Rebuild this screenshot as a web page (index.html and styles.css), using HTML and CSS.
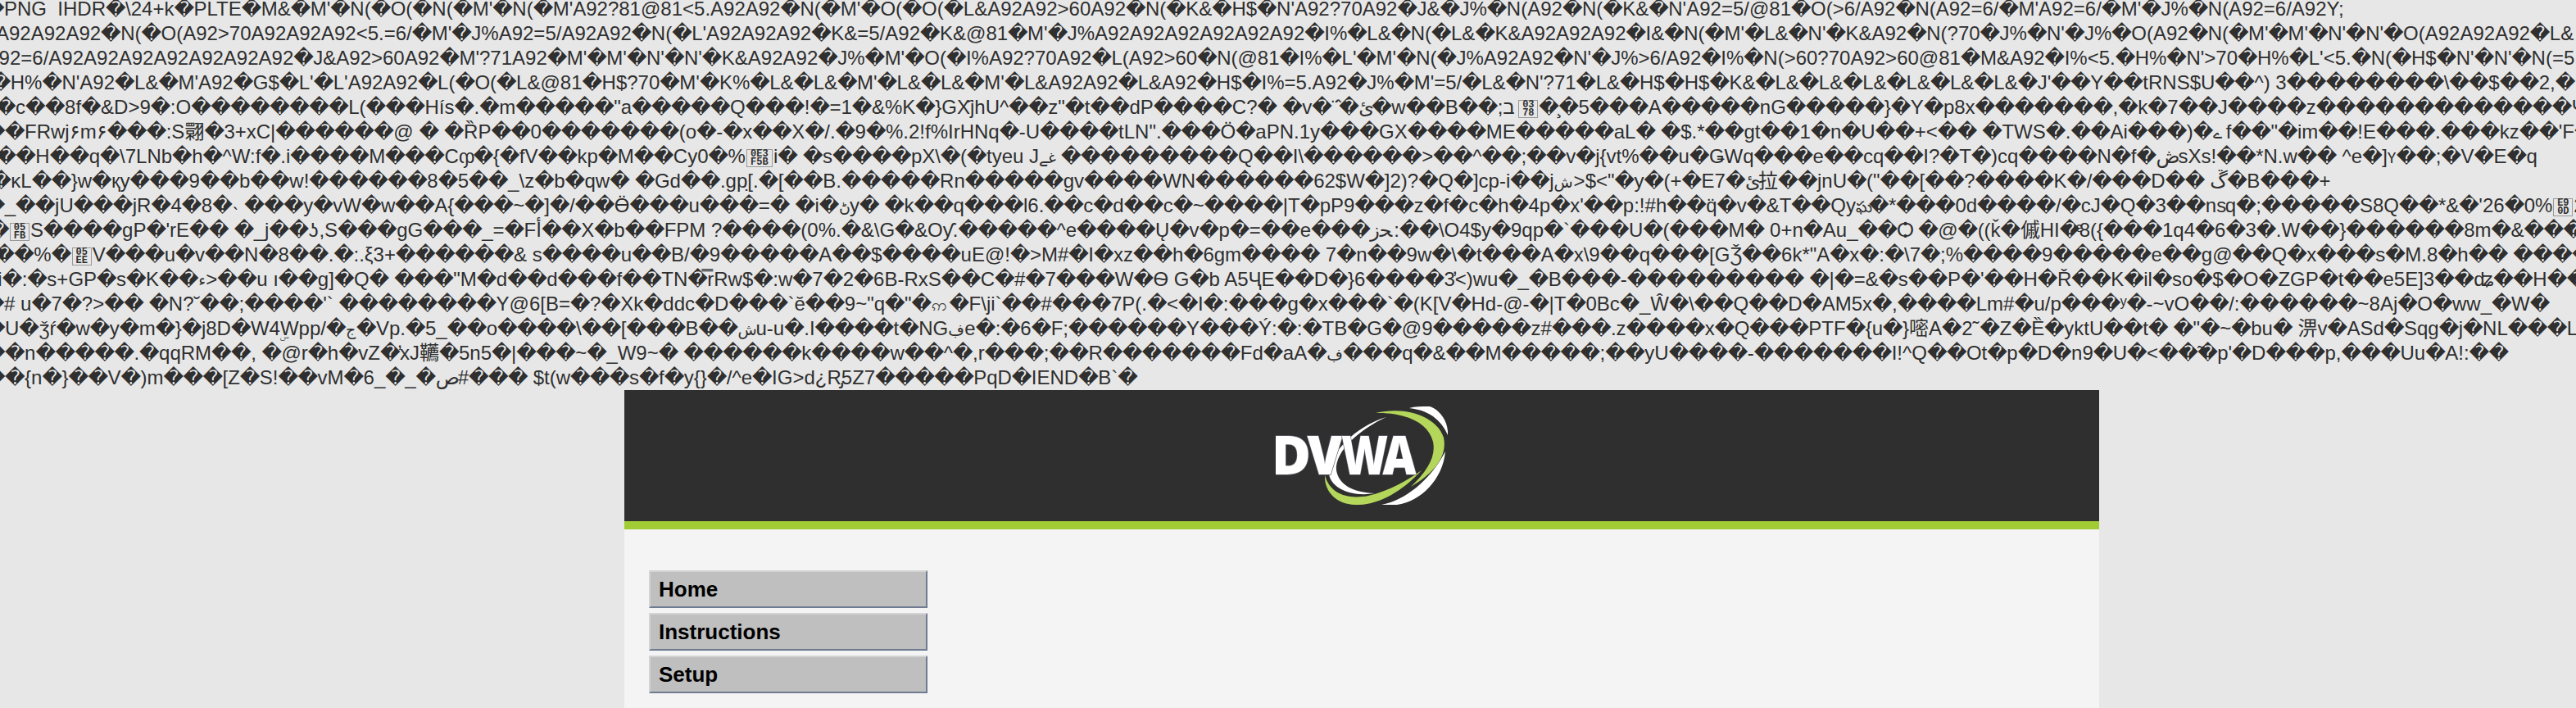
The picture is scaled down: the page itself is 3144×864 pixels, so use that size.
FILE: index.html
```html
<!DOCTYPE html>
<html lang="en">
<head>
<meta charset="utf-8">
<title>DVWA</title>
<link rel="stylesheet" href="styles.css">
</head>
<body>
<div class="dump">
<div class="row r1">�PNG  IHDR�\24+k�PLTE�M&amp;�M'�N(�O(�N(�M'�N(�M'A92?81@81&lt;5.A92A92�N(�M'�O(�O(�L&amp;A92A92>60A92�N(�K&amp;�H$�N'A92?70A92�J&amp;�J%�N(A92�N(�K&amp;�N'A92=5/@81�O(>6/A92�N(A92=6/�M'A92=6/�M'�J%�N(A92=6/A92Y;</div>
<div class="row r2">A92A92A92�N(�O(A92>70A92A92A92&lt;5.=6/�M'�J%A92=5/A92A92�N(�L'A92A92A92�K&amp;=5/A92�K&amp;@81�M'�J%A92A92A92A92A92A92�I%�L&amp;�N(�L&amp;�K&amp;A92A92A92�I&amp;�N(�M'�L&amp;�N'�K&amp;A92�N(?70�J%�N'�J%�O(A92�N(�M'�M'�N'�N'�O(A92A92A92�L&amp;</div>
<div class="row r3">92=6/A92A92A92A92A92A92A92�J&amp;A92>60A92�M'?71A92�M'�M'�N'�N'�K&amp;A92A92�J%�M'�O(�I%A92?70A92�L(A92>60�N(@81�I%�L'�M'�N(�J%A92A92�N'�J%>6/A92�I%�N(>60?70A92>60@81�M&amp;A92�I%&lt;5.�H%�N'>70�H%�L'&lt;5.�N(�H$�N'�N'�N(=5</div>
<div class="row r4">�H%�N'A92�L&amp;�M'A92�G$�L'�L'A92A92�L(�O(�L&amp;@81�H$?70�M'�K%�L&amp;�L&amp;�M'�L&amp;�L&amp;�M'�L&amp;A92A92�L&amp;A92�H$�I%=5.A92�J%�M'=5/�L&amp;�N'?71�L&amp;�H$�H$�K&amp;�L&amp;�L&amp;�L&amp;�L&amp;�L&amp;�L&amp;�J'��Y��tRNS$U��^) 3��������\��$��2,�</div>
<div class="row r5">�c��8f�&amp;D>9�:O��������L(���Hís�.�m�����"a�����Q���!�=1�&amp;%K�}GX<span class="m">҄</span>jhU^��z"�t��dP����C?� �v�<span class="g w9">¨̂</span>�<span class="g w16">ئ</span>�w��B��;<span class="g w18">ב</span><span class="hex">03<br>78</span>�<span class="m">̧</span>�5���A�����nG�����}�Y�p8x�������,�k�7��J����z�������������<span class="g w18">Ψ</span> �</div>
<div class="row r6">��FRwj<span class="g w13">۶</span>m<span class="g w13">۶</span>���:S<span class="g w24">翾</span>�3+xC|������@ � �ȐP��0�������(o�-�x��X�/.�9�%.2!f%IrHNq�-U����tLN".���Ö�aPN.1y���GX����ME�����aL� �$.*��gt��1�n�U��+&lt;�� �TWS�.��Ai���)�<span class="g w16 md">ے</span>f��"�im��!E���.���kz��'F�</div>
<div class="row r7">��H��q�\7LNb�h�^W:f�.i����M���C<span class="g w18">ჶ</span>�{�fV��kp�M��Cy0�%<span class="hex wide">0E3<br>F5B</span>i� �s����pX\�(�tyeu J<span class="g w27 md">غے</span>���������Q��I\������>��^��;��v�j{vt%��u�ǤWq���e��cq��I?�T�)cq����N�f�<span class="g w27">ڞ</span>sXs!��*N.w�� ^e�]<span class="g w11 md">Ү</span>��;�V�E�q</div>
<div class="row r8">�κL��}w�қy���9��b��w!������8�5��_\z�b�qw� �Gd��.gp[<span class="m">̣</span>.�[��B.�����Rn�����gv����WN������62$W�]2)?�Q�]cp-i��j<span class="g w24 md">ش</span>>$&lt;"�y�(+�E7�<span class="g w16">ئ</span><span class="g w24">拉</span>��jnU�("��[��?����K�/���D�� <span class="g w21">ڱ</span>�B���+</div>
<div class="row r9">�_��jU���jR�4�8�<span class="g w15">˴</span>���y�vW�w��A{���~�]�/��Ӫ���u���=� �i�<span class="g w13 md">ڻ</span>y� �k��q���l6.��c�d��c�~����|T�pP9���z�f�c�h�4p�x'��p:!#h��q̈�v�&amp;T��Qy<span class="g w16 md">ఘ</span>�*���0d����/�cJ�Q�3��<span class="g w24">ns</span>q�;�����S8Q��*&amp;�'26�0%<span class="hex">E9<br>0D</span>2</div>
<div class="row r10">�<span class="hex">05<br>FB</span>S����gP�'rE�� �_j��<span class="g w13">ʖ</span>,S���gG���_=�F<span class="g w7">أ</span>��X�b��FPM ?����(0%.�&amp;\G�&amp;Oƴ.�����^e����Ų�v�p�=��e���<span class="g w29">ﺤز</span>:��\O4$y�9qp�`���U�(���M� 0+n�Au_��<span class="g w19">Ѻ</span> �@�((ǩ�<span class="g w24">傶</span>HI�<span class="m">ͤ</span>8({���1q4�6�3�.W��}������8m�&amp;���</div>
<div class="row r11">��%�<span class="hex">05<br>EE</span>V���u�v��N�8��.�:.ξ3+������&amp; s����u��B/�9�����A��$����uE@!�>M#�I�xz��h�6gm���� 7�n��9w�\�t���A�x\9��q���[GǮ��6k*"A�x�:�\7�;%����9�����e��g@��Q�x���s�M.8�h�� ����</div>
<div class="row r12">i�:�s+GP�s�K��<span class="g w9 md">ء</span>>��u ı��g]�Q� ���"M�d��d���f��TN�<span class="m">̿</span>rRw$�:w�7�2�6B-RxS��C�#�7���W�Ѳ G�b A5ҶE��D�}6����3<span class="m">̓</span>&lt;)wu�_�B���-��������� �|�=&amp;�s��P�'��H�Ř��K�il�so�$�O�ZGP�t��e5E]3��ʥ��H��</div>
<div class="row r13">�# u�7�?>�� �N?<span class="g w7">˘</span>��;����'` ��������Y@6[B=�?�Xk�ddc�D���`ĕ��9~"q�"�<span class="g w22 md">ဢ</span>�F\ji`��#���7P(.�&lt;�I�:���g�x���`�(K[V�Hd-@-�|T�0Bc�_Ŵ�\��Q��D�AM5x�,����Lm#�u/p���ʸ�-~vO��/:������~8Aj�O�ww_�W�</div>
<div class="row r14">�U�ǯŕ�w�y�m�}�j8D�W4<span class="m">ۣ</span>Wpp/�<span class="g w13 md">ج</span>�Vp.�5_��o����\��[���B��<span class="g w22 md">ش</span>u-u�.I����t�NG<span class="g w20 md">ڣ</span>e�:�6�F;������Y���Ý:�:�TB�G�@9�����z#���.z����x�Q���PTF�{u�}<span class="g w24">嘧</span>A�2<span class="g w9">˜</span>�Z�Ȅ�yktU��t� �"�~�bu� <span class="g w24">淠</span>v�ASd�Sqg�j�NL���L�</div>
<div class="row r15">��n�����.�qqRM��, �@r�h�vZ�<span class="m">̓</span>xJ<span class="g w24">韉</span>�5n5�|���~�_W9~� ������k����w��^�,r���;��R�������Fd�aA�<span class="g w20 md">ڣ</span>���q�&amp;��M�����;��yU����-�������I!^Q��Ot�p�D�n9�U�&lt;��<span class="m">̃</span>�p'�D���p,���Uu�A!:��</div>
<div class="row r16">��{n�}��V�)m���[Z�S!��vM�6_�_�<span class="g w27">ص</span>#��� $t(w���s�f�y{}�/^e�IG>d¿R<span class="m">̡</span>5Z7�����PqD�IEND�B`�</div>
</div>
<div class="page">
<header class="header">
<svg class="logo" width="210" height="120" viewBox="0 0 210 120">
<path fill="#fff" d="M163 2C170 0 178 0 188 0C202 5 211 20 210 35C203 19 190 5 163 2Z"/>
<path fill="#fff" d="M207 55C204 89 177 116 148 120H129C157 115 188 91 207 55Z"/>
<path fill="#fff" d="M135 13C104 27 72 54 74 78C77 96 95 105 121 106C91 111 67 99 65 82C64 59 97 24 135 13Z"/>
<path fill="#b3d65b" d="M122 8C160 -1 197 13 205 38C210 62 192 82 165 98C184 80 196 62 192 43C186 19 157 7 122 8Z"/>
<path fill="#b3d65b" d="M60 84C66 106 87 114 113 109C139 103 161 90 178 78C153 105 124 121 97 120C73 119 59 103 60 84Z"/>
<g class="logo-text">
<text x="-6" y="83" textLength="49" lengthAdjust="spacingAndGlyphs">D</text>
<text x="38.5" y="83" textLength="43" lengthAdjust="spacingAndGlyphs">V</text>
<text x="80" y="83" textLength="57" lengthAdjust="spacingAndGlyphs">W</text>
<text x="130.5" y="83" textLength="41" lengthAdjust="spacingAndGlyphs">A</text>
</g>
</svg>
</header>
<nav class="menu">
<a class="item">Home</a>
<a class="item">Instructions</a>
<a class="item">Setup</a>
</nav>
</div>
<script src="dump.js"></script>
</body>
</html>
```
FILE: styles.css
```css
html, body { margin: 0; height: 864px; overflow: hidden; }
body {
  background: #e7e7e7;
  color: #2f2f2f;
  font-family: "Liberation Sans", "Noto Sans CJK JP", "DejaVu Sans", sans-serif;
  font-size: 24px;
}
.dump { margin-top: -4px; height: 480px; overflow: hidden; font-variant-ligatures: none; }
.row { height: 30px; line-height: 30px; white-space: pre; }
.r1 { text-indent: -19px; }
.r2 { text-indent: -5px; }
.r3 { text-indent: -1.4px; }
.r4 { text-indent: -11.3px; }
.r5 { text-indent: -5px; }
.r6 { text-indent: -18px; }
.r7 { text-indent: -4.7px; }
.r8 { text-indent: -10.7px; }
.r9 { text-indent: -18.3px; }
.r10 { text-indent: -13px; }
.r11 { text-indent: -6.7px; }
.r12 { text-indent: -2.7px; }
.r13 { text-indent: -19px; }
.r14, .r15, .r16 { text-indent: -18px; }
.bad { letter-spacing: -0.609px; }
.g, .m, .hex { display: inline-block; text-indent: 0; }
.m { width: 0; }
.md { font-size: 19px; }
.w7 { width: 7px; }
.w9 { width: 9px; }
.w11 { width: 11px; }
.w13 { width: 13px; }
.w15 { width: 15px; }
.w16 { width: 16px; }
.w18 { width: 18px; }
.w19 { width: 19px; }
.w20 { width: 20px; }
.w21 { width: 21px; }
.w22 { width: 22px; }
.w24 { width: 24px; }
.w27 { width: 27px; }
.w29 { width: 29px; }
.hex {
  box-sizing: border-box;
  width: 24px;
  height: 22px;
  margin: 0 1px;
  border: 1px solid #999;
  font: bold 12px/10px "Liberation Mono", monospace;
  text-align: center;
  vertical-align: -2px;
}
.hex.wide { width: 32px; }
.page { width: 1800px; height: 388px; margin-left: 762px; background: #f4f4f4; }
.header {
  display: flex;
  justify-content: center;
  align-items: center;
  height: 160px;
  background: #2f2f2f;
  border-bottom: 10px solid #a1cc33;
}
.logo { display: block; overflow: hidden; }
.logo-text {
  font: 800 66px "Open Sans", sans-serif;
  fill: #fff;
  stroke: #62626f;
  stroke-width: 1.5px;
  paint-order: stroke;
}
.menu { display: flex; flex-direction: column; gap: 6px; width: 340px; padding: 50px 30px 0; }
.item {
  box-sizing: border-box;
  height: 46px;
  padding-left: 10px;
  border: 2px solid;
  border-color: #d3d3d3 #6f7b91 #6f7b91 #d3d3d3;
  background: #bfbfbf;
  color: #000;
  font-size: 26px;
  font-weight: bold;
  line-height: 42px;
}
```
FILE: dump.js
```js
// Sets every run of replacement characters on an exact 1em pitch.
document.querySelectorAll('.row').forEach(function (row) {
  row.innerHTML = row.innerHTML.replace(/\uFFFD+/g, '<span class="bad">$&</span>');
});
```
